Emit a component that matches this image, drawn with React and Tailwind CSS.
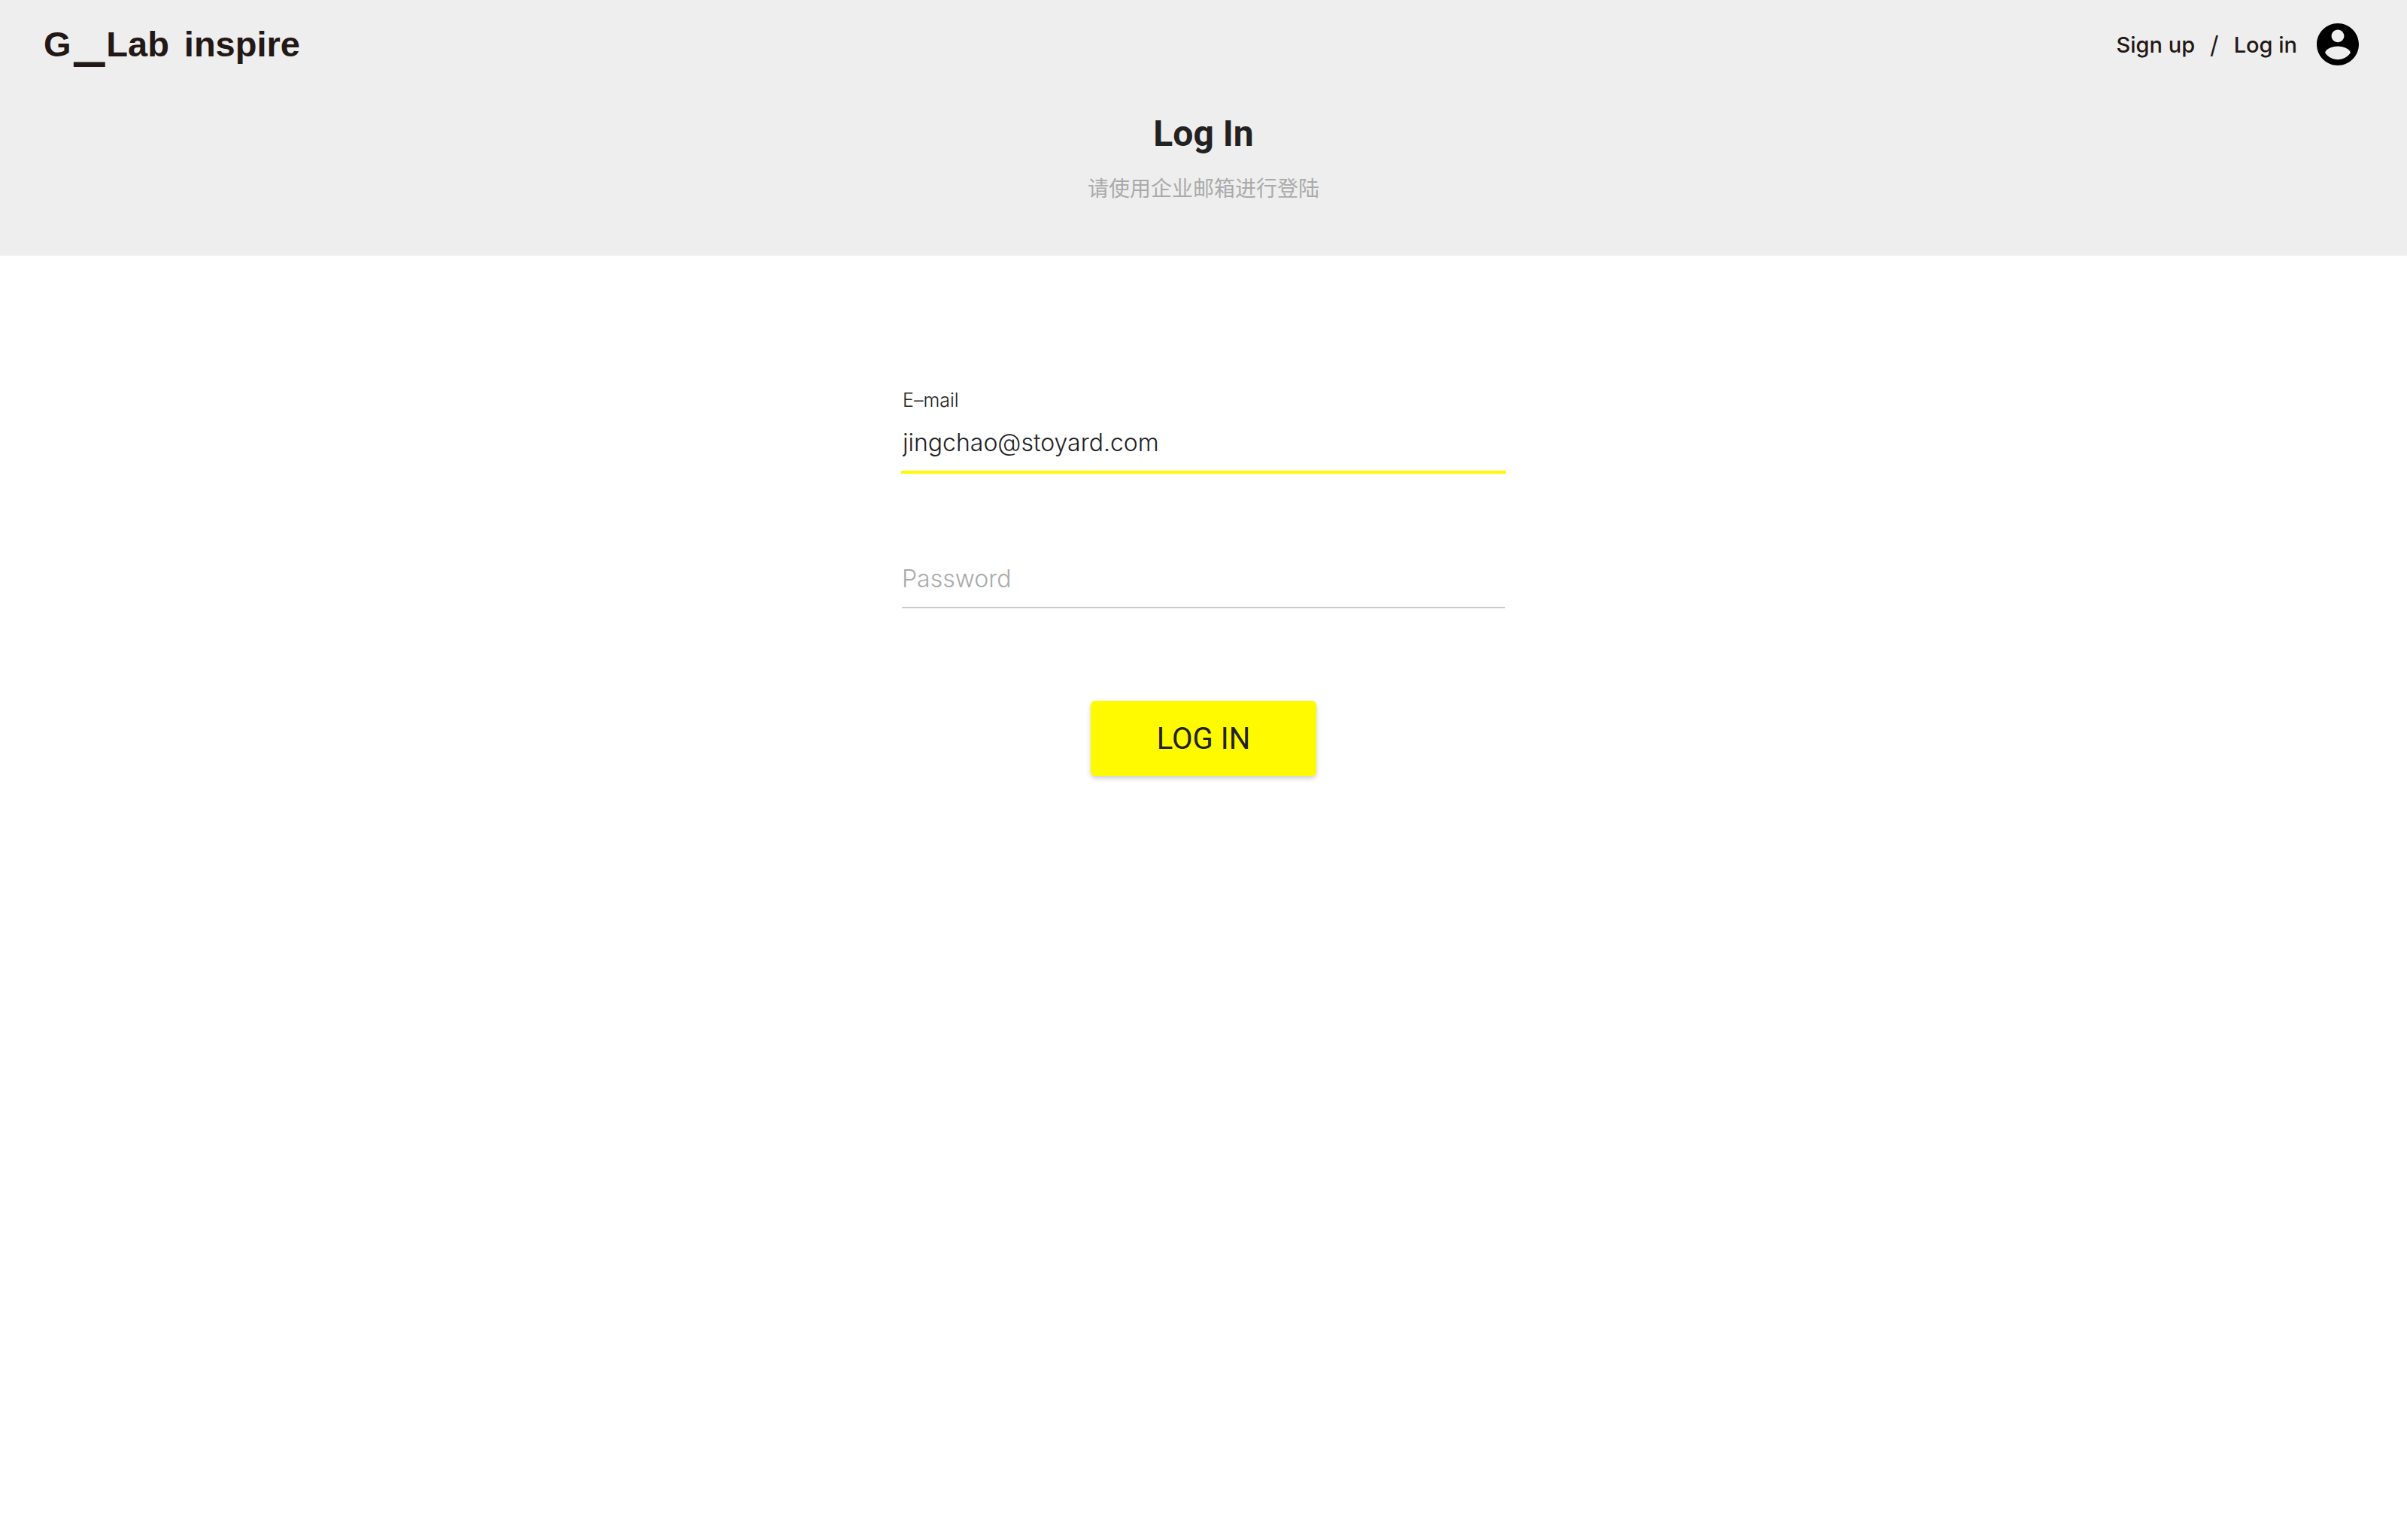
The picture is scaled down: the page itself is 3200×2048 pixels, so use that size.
function AccountIcon() {
  return (
    <svg viewBox="2 2 20 20" className="size-14" fill="black" aria-hidden="true">
      <path d="M12 2C6.48 2 2 6.48 2 12s4.48 10 10 10 10-4.48 10-10S17.52 2 12 2zm0 3c1.66 0 3 1.34 3 3s-1.34 3-3 3-3-1.34-3-3 1.34-3 3-3zm0 14.2c-2.5 0-4.71-1.28-6-3.22.03-1.99 4-3.08 6-3.08 1.99 0 5.97 1.09 6 3.08-1.29 1.94-3.5 3.22-6 3.22z" />
    </svg>
  );
}

function Logo() {
  return (
    <a
      href="#"
      aria-label="G_Lab inspire"
      className="flex items-baseline gap-5 font-['Liberation_Sans',sans-serif] text-[47px] leading-14 font-bold"
    >
      <span>
        G
        <span className="mr-1 ml-1.5 align-[-4px] text-[66px] leading-[0] [-webkit-text-stroke:4px_#231815]">
          _
        </span>
        Lab
      </span>
      <span>inspire</span>
    </a>
  );
}

function TopBar() {
  return (
    <nav className="flex h-[118px] items-center justify-between pr-16 pl-[58px] text-[#231815]">
      <Logo />
      <div className="flex items-center gap-[26px]">
        <div className="flex items-center gap-5 pt-0.5 text-[29px] leading-9 font-medium">
          <a href="#signup">Sign up</a>
          <span className="text-[32px] font-normal">/</span>
          <a href="#login">Log in</a>
        </div>
        <a href="#account" aria-label="Account">
          <AccountIcon />
        </a>
      </div>
    </nav>
  );
}

export default function App() {
  return (
    <div className="min-h-screen bg-white font-['Inter','Noto_Sans_CJK_SC',sans-serif] text-[#222222]">
      <header className="bg-[#eeeeee] pb-[66px]">
        <TopBar />
        <div className="flex flex-col items-center gap-[18px] pt-8 text-center">
          <h1 className="font-['Roboto',sans-serif] text-5xl leading-14 font-bold">Log In</h1>
          <p className="font-['Noto_Sans_CJK_SC',sans-serif] text-[28px] leading-[50px] text-[#aaaaaa]">
            请使用企业邮箱进行登陆
          </p>
        </div>
      </header>

      <main className="px-8 pt-44">
        <form className="mx-auto flex w-full max-w-[804px] flex-col">
          <div className="flex flex-col">
            <label htmlFor="email" className="pl-0.5 text-[25px] leading-8 font-[350]">
              E–mail
            </label>
            <input
              id="email"
              type="email"
              defaultValue="jingchao@stoyard.com"
              className="h-[82px] w-full border-b-4 border-[#fffa00] pt-0.5 pl-0.5 text-[32px] font-[350] outline-none"
            />
          </div>
          <div className="mt-[100px] flex flex-col px-px">
            <input
              id="password"
              type="password"
              aria-label="Password"
              placeholder="Password"
              className="h-[79px] w-full border-b-2 border-[#cccccc] pt-0.5 text-[32px] font-[350] outline-none placeholder:text-[#aaaaaa]"
            />
          </div>
          <button
            type="button"
            className="mt-[123px] h-[100px] w-[300px] self-center rounded-md bg-[#fffa00] pt-0.5 font-['Roboto',sans-serif] text-[40px] shadow-[0_3px_6px_rgba(0,0,0,0.2)]"
          >
            LOG IN
          </button>
        </form>
      </main>
    </div>
  );
}
